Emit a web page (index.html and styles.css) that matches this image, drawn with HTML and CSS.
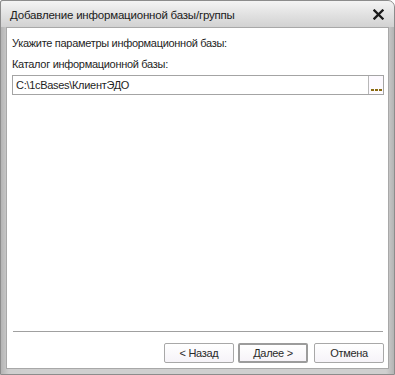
FILE: index.html
```html
<!DOCTYPE html>
<html>
<head>
    <meta charset="UTF-8">
    <title>Добавление информационной базы/группы</title>
    <link rel="stylesheet" href="styles.css">
</head>
<body>
    <div class="window">
        <div class="titlebar">
            <span class="title">Добавление информационной базы/группы</span>
            <svg class="close" width="11" height="11" viewBox="0 0 11 11">
                <path d="M1.5 1.5 L9.5 9.5 M9.5 1.5 L1.5 9.5" stroke="#1a1a1a" stroke-width="2.3" stroke-linecap="square"/>
            </svg>
        </div>
        <div class="client">
            <div class="caption">Укажите параметры информационной базы:</div>
            <div class="label">Каталог информационной базы:</div>
            <div class="field">
                <div class="value">C:\1cBases\КлиентЭДО</div>
                <div class="choose">
                    <svg width="11" height="2" viewBox="0 0 11 2">
                        <rect x="0" y="0" width="3" height="2" fill="#8a6a10"/>
                        <rect x="4" y="0" width="3" height="2" fill="#8a6a10"/>
                        <rect x="8" y="0" width="3" height="2" fill="#8a6a10"/>
                    </svg>
                </div>
            </div>
            <div class="spacer"></div>
            <div class="separator"></div>
            <div class="buttons">
                <div class="btn">&lt; Назад</div>
                <div class="btn default">Далее &gt;</div>
                <div class="btn">Отмена</div>
            </div>
        </div>
    </div>
</body>
</html>
```
FILE: styles.css
```css
html, body {
    margin: 0;
    padding: 0;
    background: #ffffff;
}

body {
    font-family: "Liberation Sans", Arial, sans-serif;
    font-size: 11px;
    letter-spacing: -0.3px;
    color: #1e1e1e;
}

.window {
    box-sizing: border-box;
    width: 395px;
    height: 375px;
    display: flex;
    flex-direction: column;
    background: linear-gradient(to right, #b4b4b4, #cfcfcf 2%, #cfcfcf 98%, #b4b4b4);
    border: 1px solid #8c8c8c;
    border-radius: 2px 7px 0 0;
}

.titlebar {
    height: 26px;
    display: flex;
    align-items: center;
    justify-content: space-between;
    padding: 0 10px 0 9px;
    background: linear-gradient(to bottom, #f4f4f4, #e2e2e2 50%, #d2d2d2);
    border-radius: 2px 6px 0 0;
}

.title {
    font-size: 11.5px;
    letter-spacing: -0.2px;
    color: #202020;
    padding-top: 1px;
}

.close {
    margin-top: 1px;
}

.client {
    flex: 1;
    display: flex;
    flex-direction: column;
    margin: 0 5px 5px 5px;
    background: #ffffff;
    border: 1px solid #a8a8a8;
    padding: 8px 4px 5px 5px;
}

.caption {
    line-height: 15px;
}

.label {
    margin-top: 6px;
    line-height: 15px;
}

.field {
    margin-top: 3px;
    height: 18px;
    display: flex;
    border: 1px solid #a4a4a4;
    background: #ffffff;
}

.value {
    flex: 1;
    padding: 2px 3px 0 3px;
    line-height: 15px;
}

.choose {
    width: 15px;
    border-left: 1px solid #b8b8b8;
    background: #fdfaff;
    display: flex;
    align-items: flex-end;
    justify-content: center;
    padding-bottom: 3px;
    box-sizing: border-box;
}

.choose svg {
    display: block;
}

.spacer {
    flex: 1;
}

.separator {
    height: 1px;
    background: #a0a0a0;
    margin: 0 1px 11px 1px;
}

.buttons {
    display: flex;
    justify-content: flex-end;
    gap: 4px;
}

.btn {
    box-sizing: border-box;
    width: 70px;
    height: 20px;
    line-height: 18px;
    text-align: center;
    border: 1px solid #a8a8a8;
    border-radius: 2px;
    color: #2a2a2a;
    background: linear-gradient(to bottom, #ffffff, #f6f3f8);
}

.btn.default {
    border: 2px solid #9c9c9c;
    line-height: 16px;
    margin-right: 2px;
}
```
